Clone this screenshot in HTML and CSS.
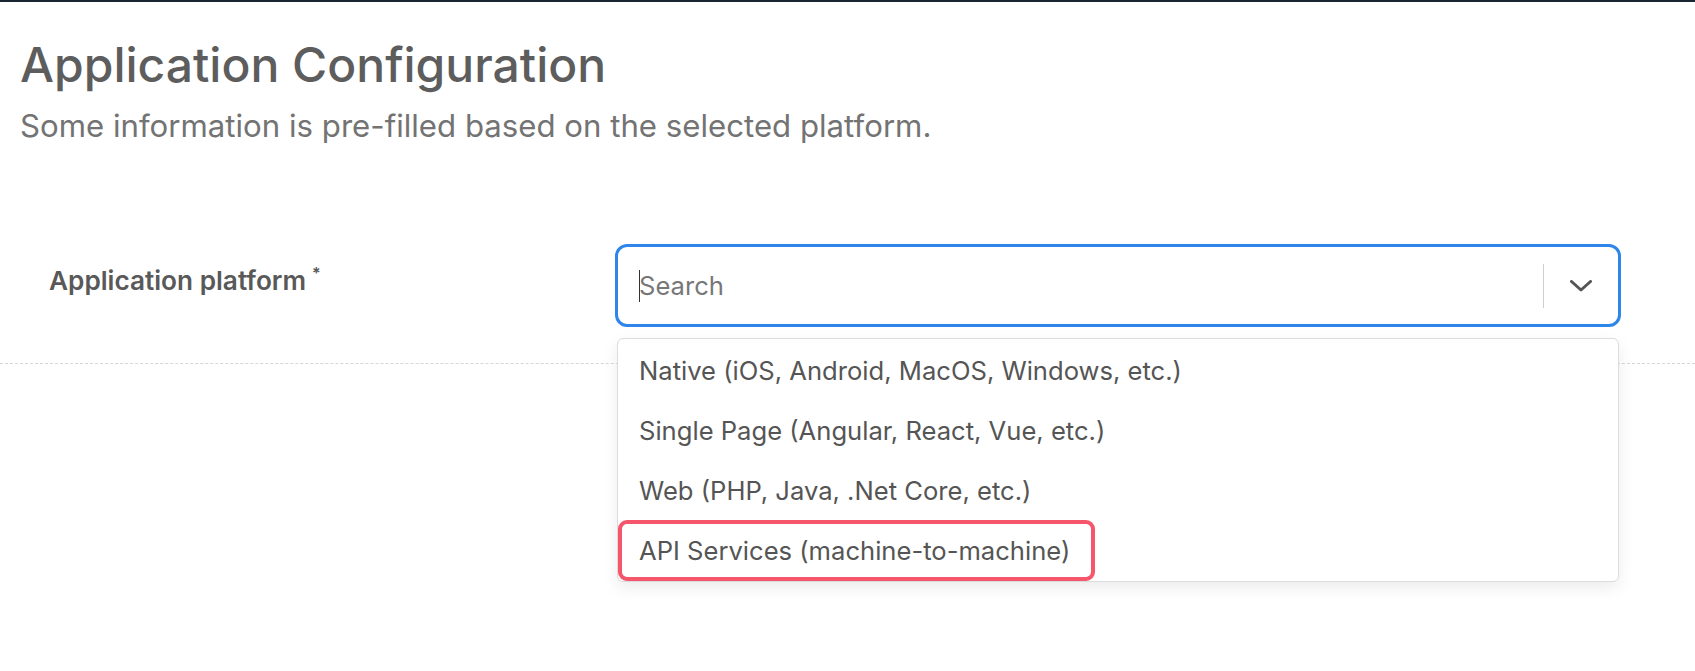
FILE: index.html
```html
<!DOCTYPE html>
<html lang="en">
<head>
  <meta charset="UTF-8" />
  <meta name="viewport" content="width=device-width, initial-scale=1.0" />
  <title>Application Configuration</title>
  <link rel="stylesheet" href="styles.css">
</head>
<body>

  <!-- === HEADER === -->
  <div class="page-head">
    <h1>Application Configuration</h1>
    <p class="subtitle">Some information is pre-filled based on the selected platform.</p>
  </div>

  <!-- === FORM ROW === -->
  <div class="form-row">
    <label class="field-label">Application platform<sup>*</sup></label>

    <div class="select-wrap">
      <div class="select-box">
        <div class="select-input">
          <span class="caret"></span><span class="placeholder">Search</span>
        </div>
        <span class="select-sep"></span>
        <div class="select-arrow">
          <svg width="22" height="12" viewBox="0 0 22 12">
            <polyline points="1.5,1.5 11,10 20.5,1.5" fill="none" stroke="#555" stroke-width="3" stroke-linecap="round" stroke-linejoin="round" />
          </svg>
        </div>
      </div>

      <ul class="select-menu">
        <li>Native (iOS, Android, MacOS, Windows, etc.)</li>
        <li>Single Page (Angular, React, Vue, etc.)</li>
        <li>Web (PHP, Java, .Net Core, etc.)</li>
        <li class="marked"><span>API Services (machine-to-machine)</span></li>
      </ul>
    </div>
  </div>

</body>
</html>
```

FILE: styles.css
```css
* {
  margin: 0;
  padding: 0;
  box-sizing: border-box;
}

html, body {
  height: 100%;
  overflow: hidden;
}

body {
  background: #fff;
  font-family: Inter, "Noto Sans", sans-serif;
  color: #5c5c5c;
  border-top: 2px solid #172632;
}

/* === HEADER === */
.page-head {
  padding: 34px 20px 0;
}

.page-head h1 {
  font-size: 48px;
  line-height: 58px;
  font-weight: 500;
  color: #5d5d5d;
}

.subtitle {
  margin-top: 14px;
  font-size: 31.2px;
  line-height: 36px;
  color: #737373;
}

/* === FORM ROW === */
.form-row {
  display: flex;
  align-items: flex-start;
  margin-top: 100px;
  padding: 0 0 36px 49px;
  border-bottom: 1px dashed #d6d6d6;
}

.field-label {
  width: 566px;
  padding-top: 13px;
  font-size: 26.2px;
  line-height: 32px;
  font-weight: 600;
  color: #595959;
}

.field-label sup {
  font-size: 16px;
  margin-left: 6px;
  vertical-align: 11px;
}

.select-wrap {
  position: relative;
  width: 1006px;
}

.select-box {
  display: flex;
  align-items: center;
  height: 83px;
  border: 3px solid #2f86ea;
  border-radius: 12px;
  background: #fff;
}

.select-input {
  flex: 1;
  display: flex;
  align-items: center;
  padding-left: 21px;
  font-size: 25.6px;
}

.caret {
  width: 1px;
  height: 32px;
  background: #333;
  margin-right: -1px;
}

.placeholder {
  color: #777;
}

.select-sep {
  width: 1px;
  height: 44px;
  background: #cfcfcf;
}

.select-arrow {
  width: 74px;
  display: flex;
  justify-content: center;
  align-items: center;
}

/* === DROPDOWN === */
.select-menu {
  position: absolute;
  top: 94px;
  left: 2px;
  width: 1002px;
  padding: 1px 0;
  list-style: none;
  background: #fff;
  border: 1px solid #dcdcdc;
  border-radius: 6px;
  box-shadow: 0 6px 16px rgba(0, 0, 0, 0.08);
  z-index: 5;
}

.select-menu li {
  height: 60px;
  display: flex;
  align-items: center;
  padding-left: 21px;
  font-size: 25.6px;
  color: #555;
}

.select-menu li.marked {
  padding-left: 0;
}

.select-menu li.marked span {
  display: flex;
  align-items: center;
  height: 61px;
  padding: 0 21px 0 17px;
  border: 4px solid #f5566b;
  border-radius: 9px;
}
```
